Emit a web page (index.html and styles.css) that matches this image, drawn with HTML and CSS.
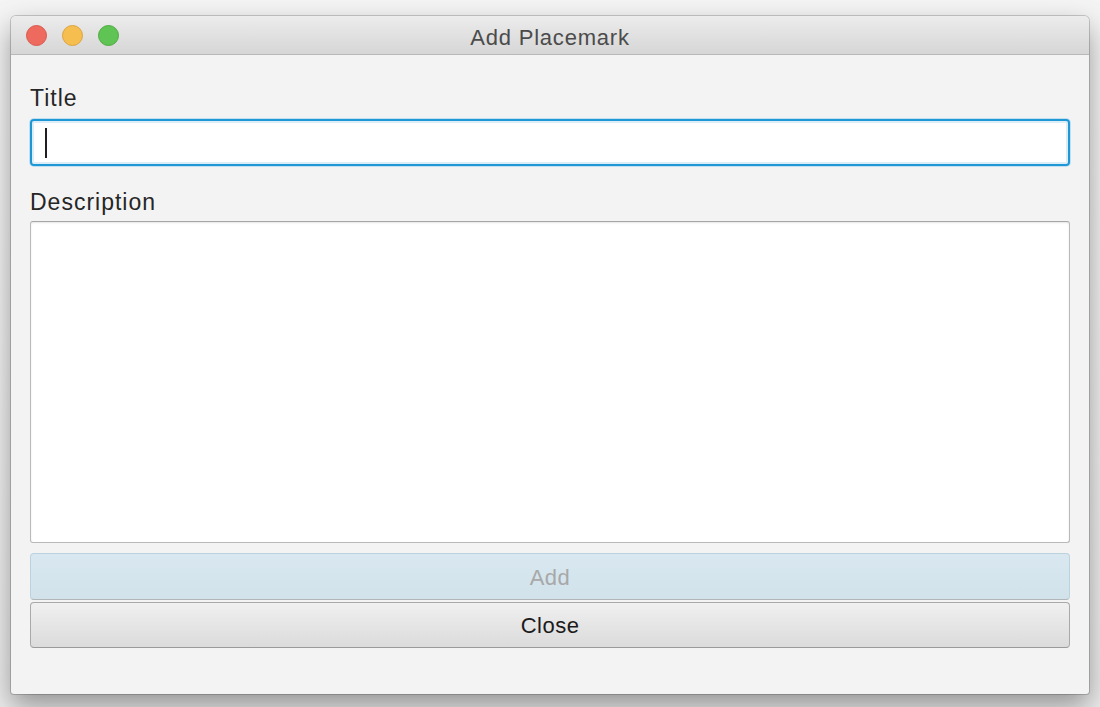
FILE: index.html
```html
<!DOCTYPE html>
<html lang="en">
<head>
<meta charset="utf-8">
<title>Add Placemark</title>
<link rel="stylesheet" href="styles.css">
</head>
<body>
<div class="window">
  <div class="titlebar">
    <div class="lights">
      <span class="light red"></span>
      <span class="light yellow"></span>
      <span class="light green"></span>
    </div>
    <div class="wtitle">Add Placemark</div>
    <div></div>
  </div>
  <div class="content">
    <div class="label">Title</div>
    <div class="input focused"><span class="caret"></span></div>
    <div class="label desc">Description</div>
    <div class="textarea"></div>
    <div class="btn add">Add</div>
    <div class="btn close">Close</div>
  </div>
</div>
</body>
</html>
```

FILE: styles.css
```css
html, body {
  margin: 0;
  padding: 0;
}
body {
  width: 1100px;
  height: 707px;
  overflow: hidden;
  background: linear-gradient(#f4f4f4, #ececec);
  font-family: "Liberation Sans", Arial, sans-serif;
}
.window {
  margin: 16px 11px 0;
  width: 1078px;
  height: 678px;
  box-sizing: border-box;
  background: #f3f3f3;
  border-radius: 5px 5px 3px 3px;
  box-shadow: 0 0 0 1px rgba(0,0,0,0.18), 0 12px 28px rgba(0,0,0,0.38);
  overflow: hidden;
}
.titlebar {
  height: 38px;
  border-bottom: 1px solid #b8b8b8;
  background: linear-gradient(#ececec, #d6d6d6);
  display: grid;
  grid-template-columns: 1fr auto 1fr;
  align-items: center;
}
.lights {
  display: flex;
  gap: 15px;
  padding-left: 15px;
}
.light {
  width: 21px;
  height: 21px;
  border-radius: 50%;
  box-sizing: border-box;
}
.red { background: #ef6a5e; border: 1px solid #d9574c; }
.yellow { background: #f6be4f; border: 1px solid #dba43e; }
.green { background: #5fc453; border: 1px solid #4daa3f; }
.wtitle {
  font-size: 22px;
  letter-spacing: 0.8px;
  color: #4b4b4b;
  line-height: 26px;
  padding-top: 5px;
}
.content {
  padding: 29px 19px 0;
  display: flex;
  flex-direction: column;
}
.label {
  font-size: 23px;
  line-height: 26px;
  letter-spacing: 1px;
  color: #262626;
  height: 26px;
  padding-top: 1px;
  box-sizing: border-box;
}
.desc {
  margin-top: 22px;
}
.input {
  margin-top: 9px;
  height: 47px;
  box-sizing: border-box;
  background: #fff;
  border-radius: 4px;
  display: flex;
  align-items: center;
}
.focused {
  border: 2px solid #1e98d5;
  box-shadow: inset 0 0 0 2px #dcedf7, 0 0 0 1px rgba(160,210,240,0.6);
}
.caret {
  width: 2px;
  height: 30px;
  background: #1f1f1f;
  margin-left: 13px;
}
.textarea {
  margin-top: 7px;
  height: 322px;
  box-sizing: border-box;
  background: #fff;
  border: 1px solid #b9b9b9;
  border-top-color: #a6a6a6;
  border-radius: 3px;
  box-shadow: inset 0 1px 2px rgba(0,0,0,0.10);
}
.btn {
  box-sizing: border-box;
  border-radius: 4px;
  display: flex;
  align-items: center;
  justify-content: center;
  font-size: 22px;
  letter-spacing: 0.5px;
  padding-top: 2px;
}
.add {
  margin-top: 10px;
  height: 47px;
  background: linear-gradient(#d9e8f0, #d1e2eb);
  border: 1px solid #bcd2de;
  border-bottom-color: #b2b6b9;
  color: #a8a8a8;
}
.close {
  margin-top: 2px;
  height: 46px;
  background: linear-gradient(#f0f0f0, #dbdbdb);
  border: 1px solid #a9a9a9;
  border-bottom-color: #9a9a9a;
  color: #1b1b1b;
}
```
